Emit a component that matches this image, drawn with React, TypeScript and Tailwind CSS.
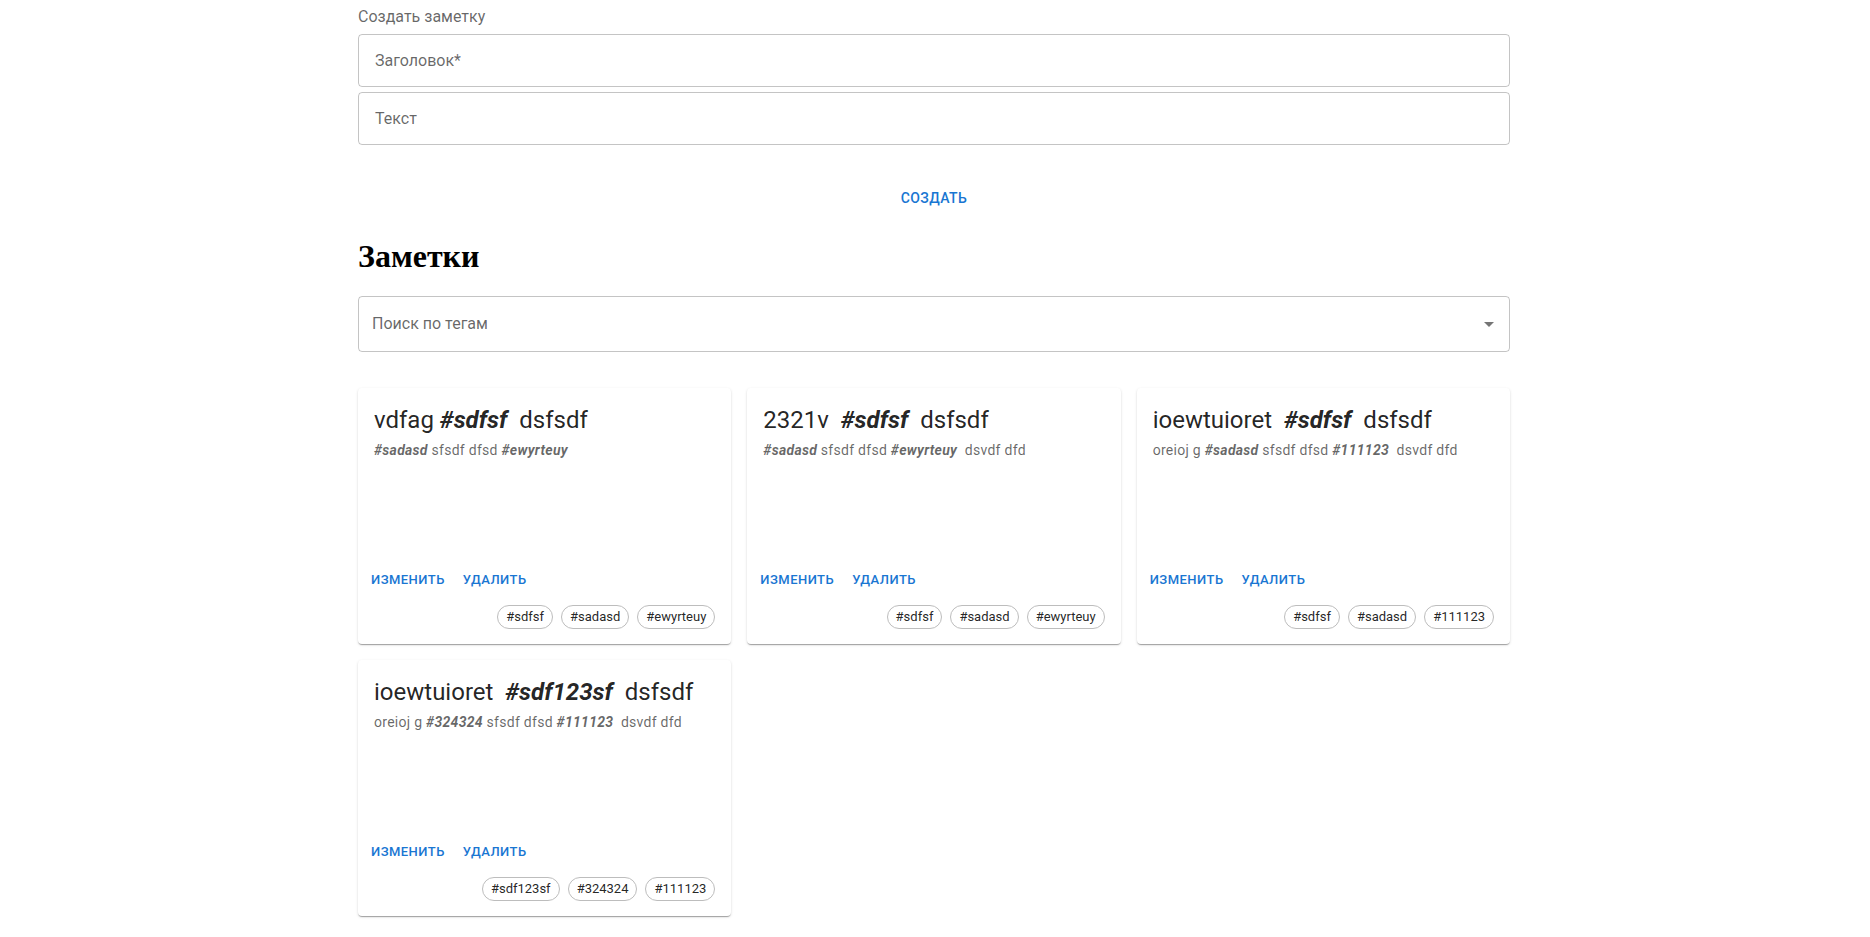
import React from 'react';

type Note = {
  title: string;
  text: string;
  tags: string[];
};

const notes: Note[] = [
  {
    title: 'vdfag #sdfsf  dsfsdf',
    text: '#sadasd sfsdf dfsd #ewyrteuy',
    tags: ['#sdfsf', '#sadasd', '#ewyrteuy']
  },
  {
    title: '2321v  #sdfsf  dsfsdf',
    text: '#sadasd sfsdf dfsd #ewyrteuy  dsvdf dfd',
    tags: ['#sdfsf', '#sadasd', '#ewyrteuy']
  },
  {
    title: 'ioewtuioret  #sdfsf  dsfsdf',
    text: 'oreioj g #sadasd sfsdf dfsd #111123  dsvdf dfd',
    tags: ['#sdfsf', '#sadasd', '#111123']
  },
  {
    title: 'ioewtuioret  #sdf123sf  dsfsdf',
    text: 'oreioj g #324324 sfsdf dfsd #111123  dsvdf dfd',
    tags: ['#sdf123sf', '#324324', '#111123']
  }
];

// hashtags inside text are shown bold + italic
const Tagged = ({ value }: { value: string }) => (
  <>
    {value.split(/(#\w+)/).map((part, i) =>
      part.startsWith('#') ? (
        <b key={i} className="italic font-bold">
          {part}
        </b>
      ) : (
        <span key={i}>{part}</span>
      )
    )}
  </>
);

const NoteCard = ({ note }: { note: Note }) => (
  <div className="h-[256px] flex flex-col bg-white rounded shadow-[0px_2px_1px_-1px_rgba(0,0,0,0.2),0px_1px_1px_0px_rgba(0,0,0,0.14),0px_1px_3px_0px_rgba(0,0,0,0.12)]">
    <div className="p-4">
      <div className="text-[24px] leading-8 text-black/[0.87] whitespace-pre">
        <Tagged value={note.title} />
      </div>
      <div className="mt-[4px] text-sm leading-5 tracking-[0.28px] text-black/60 whitespace-pre">
        <Tagged value={note.text} />
      </div>
    </div>
    <div className="mt-auto flex items-center gap-2 px-2 pt-2 pb-[10px]">
      <button className="h-[31px] px-[5px] text-[13px] font-medium uppercase tracking-[0.46px] text-[#1976d2] rounded">
        Изменить
      </button>
      <button className="h-[31px] px-[5px] text-[13px] font-medium uppercase tracking-[0.46px] text-[#1976d2] rounded">
        Удалить
      </button>
    </div>
    <div className="flex justify-end gap-2 pr-4 pb-[15px]">
      {note.tags.map((tag) => (
        <span
          key={tag}
          className="h-6 px-2 flex items-center border border-[#bdbdbd] rounded-full text-[13px] text-black/[0.87]"
        >
          {tag}
        </span>
      ))}
    </div>
  </div>
);

export default function App() {
  return (
    <main className="min-h-screen bg-white pr-[2px] font-['Roboto',sans-serif]">
      <div className="w-[1152px] mx-auto">
        {/* Create note form */}
        <section className="pt-[5px]">
          <div className="text-base leading-6 text-black/60">Создать заметку</div>
          <div className="mt-[5px] flex flex-col gap-[5px]">
            <div className="h-[53px] border border-black/[0.23] rounded flex items-center px-4 text-base text-black/60">
              Заголовок*
            </div>
            <div className="h-[53px] border border-black/[0.23] rounded flex items-center px-4 text-base text-black/60">
              Текст
            </div>
          </div>
          <div className="mt-[34px] flex justify-center">
            <button className="h-[37px] px-2 text-sm font-medium uppercase tracking-[0.4px] text-[#1976d2] rounded">
              Создать
            </button>
          </div>
        </section>

        {/* Notes list */}
        <section>
          <h1 className="mt-[22px] font-['Liberation_Serif',serif] text-[32px] font-bold leading-[37px] text-black">
            Заметки
          </h1>
          <div className="mt-[21px] h-[56px] border border-black/[0.23] rounded flex items-center justify-between pl-[13px] pr-[8px] text-base text-black/60">
            <span>Поиск по тегам</span>
            <svg width="24" height="24" viewBox="0 0 24 24" className="fill-black/[0.54]">
              <path d="M7 10l5 5 5-5z" />
            </svg>
          </div>
          <div className="mt-[36px] grid grid-cols-3 gap-x-4 gap-y-4">
            {notes.map((note, i) => (
              <NoteCard key={i} note={note} />
            ))}
          </div>
        </section>
      </div>
    </main>
  );
}
